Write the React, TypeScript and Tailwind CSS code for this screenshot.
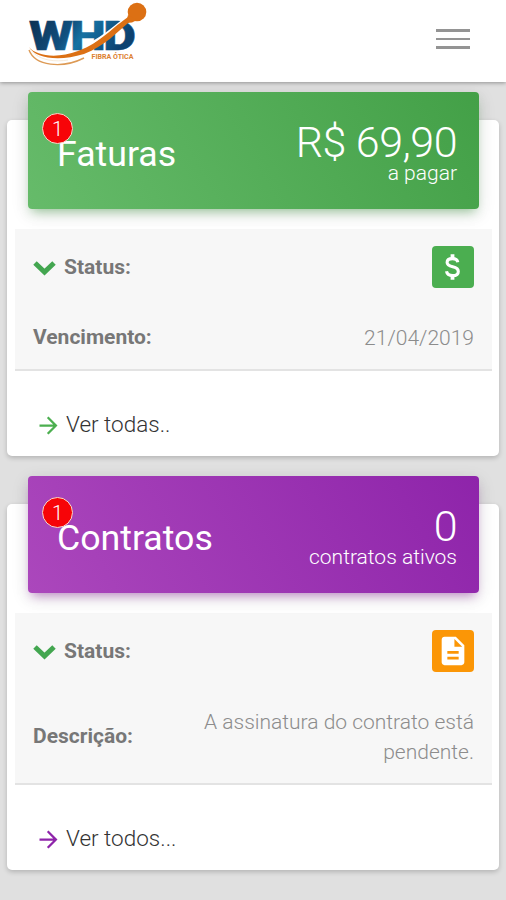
import React from 'react';
import { MdArrowForward, MdDescription } from 'react-icons/md';

function Logo() {
  return (
    <svg width="124" height="68" viewBox="26 0 124 68" role="img" aria-label="WHD Fibra Ótica">
      <defs>
        <linearGradient id="logoBlue" x1="0" y1="0" x2="1" y2="0.3">
          <stop offset="0" stopColor="#0b2c4d" />
          <stop offset="0.45" stopColor="#11507f" />
          <stop offset="0.6" stopColor="#1672a3" />
          <stop offset="1" stopColor="#0d4270" />
        </linearGradient>
      </defs>
      <text
        x="29"
        y="49.7"
        textLength="104.5"
        letterSpacing="-2"
        lengthAdjust="spacingAndGlyphs"
        fontSize="40.5"
        fontWeight="900"
        fill="url(#logoBlue)"
        stroke="url(#logoBlue)"
        strokeWidth="0.5"
        className="font-['Roboto',sans-serif]"
      >
        WHD
      </text>
      <path d="M127 18 C113 28 104 38 88 45" fill="none" stroke="#fff" strokeWidth="3" />
      <path
        d="M29 47 C36 56 57 59 78 51 C102 42 111 28 131 15 L134 18 C116 33 105 46 84 54 C58 62 35 58 29 47 Z"
        fill="#dc7014"
      />
      <path d="M29 50 C35 66 62 69 84 58" fill="none" stroke="#dd9a55" strokeWidth="1.4" />
      <path d="M31 50 C39 61 56 62 68 60" fill="none" stroke="#f7ead8" strokeWidth="1" />
      <circle cx="137" cy="12" r="9.3" fill="#dc7014" />
      <path d="M128 15 L137 20 L132 22.5 L126 23 Z" fill="#dc7014" />
      <text
        x="91.5"
        y="59"
        textLength="42"
        lengthAdjust="spacingAndGlyphs"
        fontSize="6.3"
        fontWeight="700"
        fill="#dc8130"
        className="font-['Roboto',sans-serif]"
      >
        FIBRA ÓTICA
      </text>
    </svg>
  );
}

function Chevron() {
  return (
    <svg width="24" height="16" viewBox="0 0 24 16" className="shrink-0">
      <path d="M2 3 L11.5 12 L21 3" fill="none" stroke="#43a650" strokeWidth="5" />
    </svg>
  );
}

function Cifrao() {
  return (
    <svg width="42" height="42" viewBox="0 0 42 42" fill="none" stroke="currentColor">
      <path
        d="M25.8 16.3 C25.3 13.6 23.2 12.6 20.5 12.6 C17.3 12.6 15.1 14 15.1 16.5 C15.1 19 17.3 19.9 20.7 20.8 C24.3 21.7 26.3 22.9 26.3 25.4 C26.3 28.2 24 29.6 20.7 29.6 C17.4 29.6 15 28.3 14.5 25.3"
        strokeWidth="3.1"
      />
      <path d="M20.5 8.3 V12.5 M20.5 29.5 V33.8" strokeWidth="3.8" />
    </svg>
  );
}

type ResumoCardProps = {
  titulo: string;
  avisos: number;
  valor: string;
  legenda: string;
  bannerClass: string;
  icone: React.ReactNode;
  iconeClass: string;
  campo: string;
  texto: string;
  campoClass: string;
  link: string;
  setaClass: string;
};

function ResumoCard(props: ResumoCardProps) {
  return (
    <section className="mx-[7px] flow-root rounded-[5px] bg-white shadow-[0_2px_5px_rgba(0,0,0,0.2)]">
      <div
        className={`relative ml-[21px] mr-5 -mt-7 flex h-[117px] justify-between rounded-[4px] pl-[29px] pr-[22px] text-white ${props.bannerClass}`}
      >
        <span className="absolute left-[14px] top-[21px] flex h-[31px] w-[31px] items-center justify-center rounded-full border-[1.5px] border-[#f8d9c8] bg-[#f70408] text-[20px] font-light">
          {props.avisos}
        </span>
        <h2 className="pt-[40px] text-[35.7px] leading-[44px]">{props.titulo}</h2>
        <div className="pt-[29px] text-right font-light">
          <p className="text-[43px] leading-[43px] tracking-[-0.5px]">{props.valor}</p>
          <p className="-mt-[3px] text-[21px] leading-[24px]">{props.legenda}</p>
        </div>
      </div>

      <div className="ml-2 mr-[7px] mt-5 border-b-2 border-[#e3e3e3] bg-[#f7f7f7] px-[18px] text-[21px] text-[#8c8c8c]">
        <div className="flex h-[76px] items-center justify-between">
          <div className="flex items-center gap-[7px] pt-[2px]">
            <Chevron />
            <strong className="font-bold text-[#777]">Status:</strong>
          </div>
          <span
            className={`flex h-[42px] w-[42px] items-center justify-center rounded-[4px] text-white ${props.iconeClass}`}
          >
            {props.icone}
          </span>
        </div>
        <div className={`flex items-center justify-between pt-[2px] ${props.campoClass}`}>
          <strong className="font-bold text-[#777]">{props.campo}</strong>
          <span className="w-[290px] text-right font-light leading-[30px]">{props.texto}</span>
        </div>
      </div>

      <a className="flex h-[85px] items-center gap-[4px] pl-[28px] pt-[23px] text-[22.5px] font-light text-[#333]">
        <MdArrowForward size={27} className={props.setaClass} />
        {props.link}
      </a>
    </section>
  );
}

export default function App() {
  return (
    <div className="h-[900px] w-[506px] overflow-hidden bg-[#e0e0e0] font-['Roboto',sans-serif]">
      <header className="flex h-[82px] items-start justify-between bg-white pl-[26px] pr-9 shadow-[0_1px_4px_rgba(0,0,0,0.35)]">
        <Logo />
        <button className="mt-[29px] flex w-[34px] flex-col gap-[6px]" aria-label="Menu">
          <span className="h-[2.5px] w-full bg-[#949494]" />
          <span className="h-[2.5px] w-full bg-[#949494]" />
          <span className="h-[2.5px] w-full bg-[#949494]" />
        </button>
      </header>

      <main className="flex flex-col gap-12 pt-[38px]">
        <ResumoCard
          titulo="Faturas"
          avisos={1}
          valor="R$ 69,90"
          legenda="a pagar"
          bannerClass="bg-[linear-gradient(60deg,#66bb6a,#43a047)] shadow-[0_5px_18px_rgba(0,0,0,0.12),0_6px_10px_-4px_rgba(76,175,80,0.5)]"
          icone={<Cifrao />}
          iconeClass="bg-[#4bae50]"
          campo="Vencimento:"
          texto="21/04/2019"
          campoClass="h-16"
          link="Ver todas.."
          setaClass="text-[#4caf50]"
        />
        <ResumoCard
          titulo="Contratos"
          avisos={1}
          valor="0"
          legenda="contratos ativos"
          bannerClass="bg-[linear-gradient(60deg,#ab47bc,#8e24aa)] shadow-[0_5px_18px_rgba(0,0,0,0.12),0_6px_10px_-4px_rgba(156,39,176,0.5)]"
          icone={<MdDescription size={34} />}
          iconeClass="bg-[#fb9606]"
          campo="Descrição:"
          texto="A assinatura do contrato está pendente."
          campoClass="h-[94px]"
          link="Ver todos..."
          setaClass="text-[#8e24aa]"
        />
      </main>
    </div>
  );
}
